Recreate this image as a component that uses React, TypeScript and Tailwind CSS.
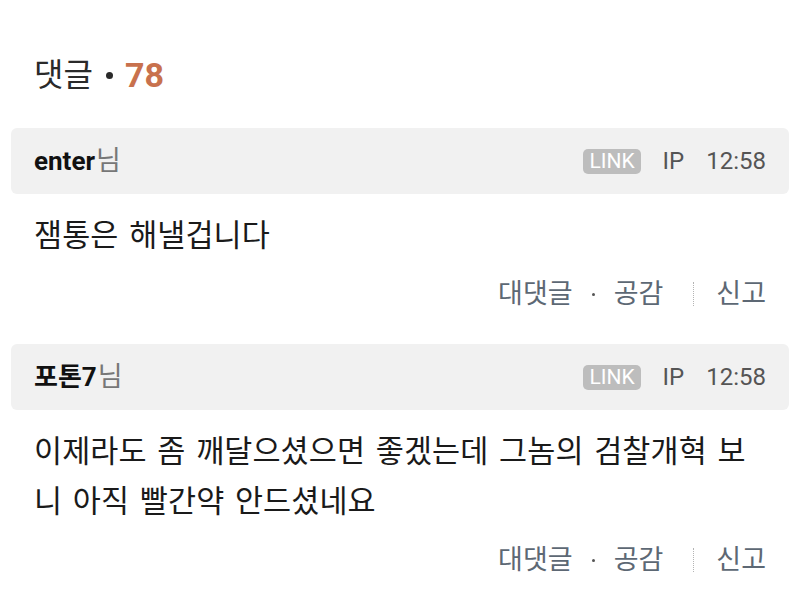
import React from 'react';

type Comment = {
  id: number;
  author: string;
  time: string;
  body: string;
};

const comments: Comment[] = [
  { id: 1, author: 'enter', time: '12:58', body: '잼통은 해낼겁니다' },
  {
    id: 2,
    author: '포톤7',
    time: '12:58',
    body: '이제라도 좀 깨달으셨으면 좋겠는데 그놈의 검찰개혁 보니 아직 빨간약 안드셨네요',
  },
];

const font = { fontFamily: 'Roboto, "Noto Sans CJK KR", sans-serif' };

const CommentItem: React.FC<{ comment: Comment; last?: boolean }> = ({ comment, last }) => {
  return (
    <div className={last ? '' : 'mb-[32px]'}>
      <div className="mx-[11px] h-[66px] rounded-[6px] bg-[#f1f1f1] px-[23px] flex items-center justify-between">
        <div className="flex items-baseline">
          <span className="text-[26px] font-bold text-[#111]">{comment.author}</span>
          <span className="text-[27px] text-[#777] ml-[1px]">님</span>
        </div>
        <div className="flex items-center text-[24px] text-[#555]">
          <span className="h-[25px] px-[6px] rounded-[5px] bg-[#bdbdbd] text-white text-[21px] leading-[25px]">
            LINK
          </span>
          <span className="ml-[22px]">IP</span>
          <span className="ml-[22px]">{comment.time}</span>
        </div>
      </div>
      <p className="mt-[17px] pl-[34px] pr-[40px] text-[30.5px] leading-[50px] tracking-[0.1px] [word-spacing:3px] text-[#1a1a1a]">
        {comment.body}
      </p>
      <div className="mt-[15px] flex items-center justify-end pr-[34px] text-[27px] leading-[36px] text-[#5d6874]">
        <span>대댓글</span>
        <span className="mx-[19px] w-[3px] h-[3px] rounded-full bg-[#555]" />
        <span>공감</span>
        <span className="ml-[30px] mr-[22px] h-[24px] border-l border-dotted border-[#b4b4b4]" />
        <span>신고</span>
      </div>
    </div>
  );
};

export default function App() {
  return (
    <div className="w-[800px] h-[605px] overflow-hidden bg-white" style={font}>
      <h2 className="pt-[55px] pl-[34px] mb-[33px] flex items-center h-[95px] leading-[40px] text-[#2a2a2a]">
        <span className="text-[32px] font-normal">댓글</span>
        <span className="ml-[13px] mr-[12px] w-[7px] h-[7px] rounded-full bg-[#2a2a2a]" />
        <span className="text-[34px] font-bold text-[#c8714d]">78</span>
      </h2>
      {comments.map((c, i) => (
        <CommentItem key={c.id} comment={c} last={i === comments.length - 1} />
      ))}
    </div>
  );
}
